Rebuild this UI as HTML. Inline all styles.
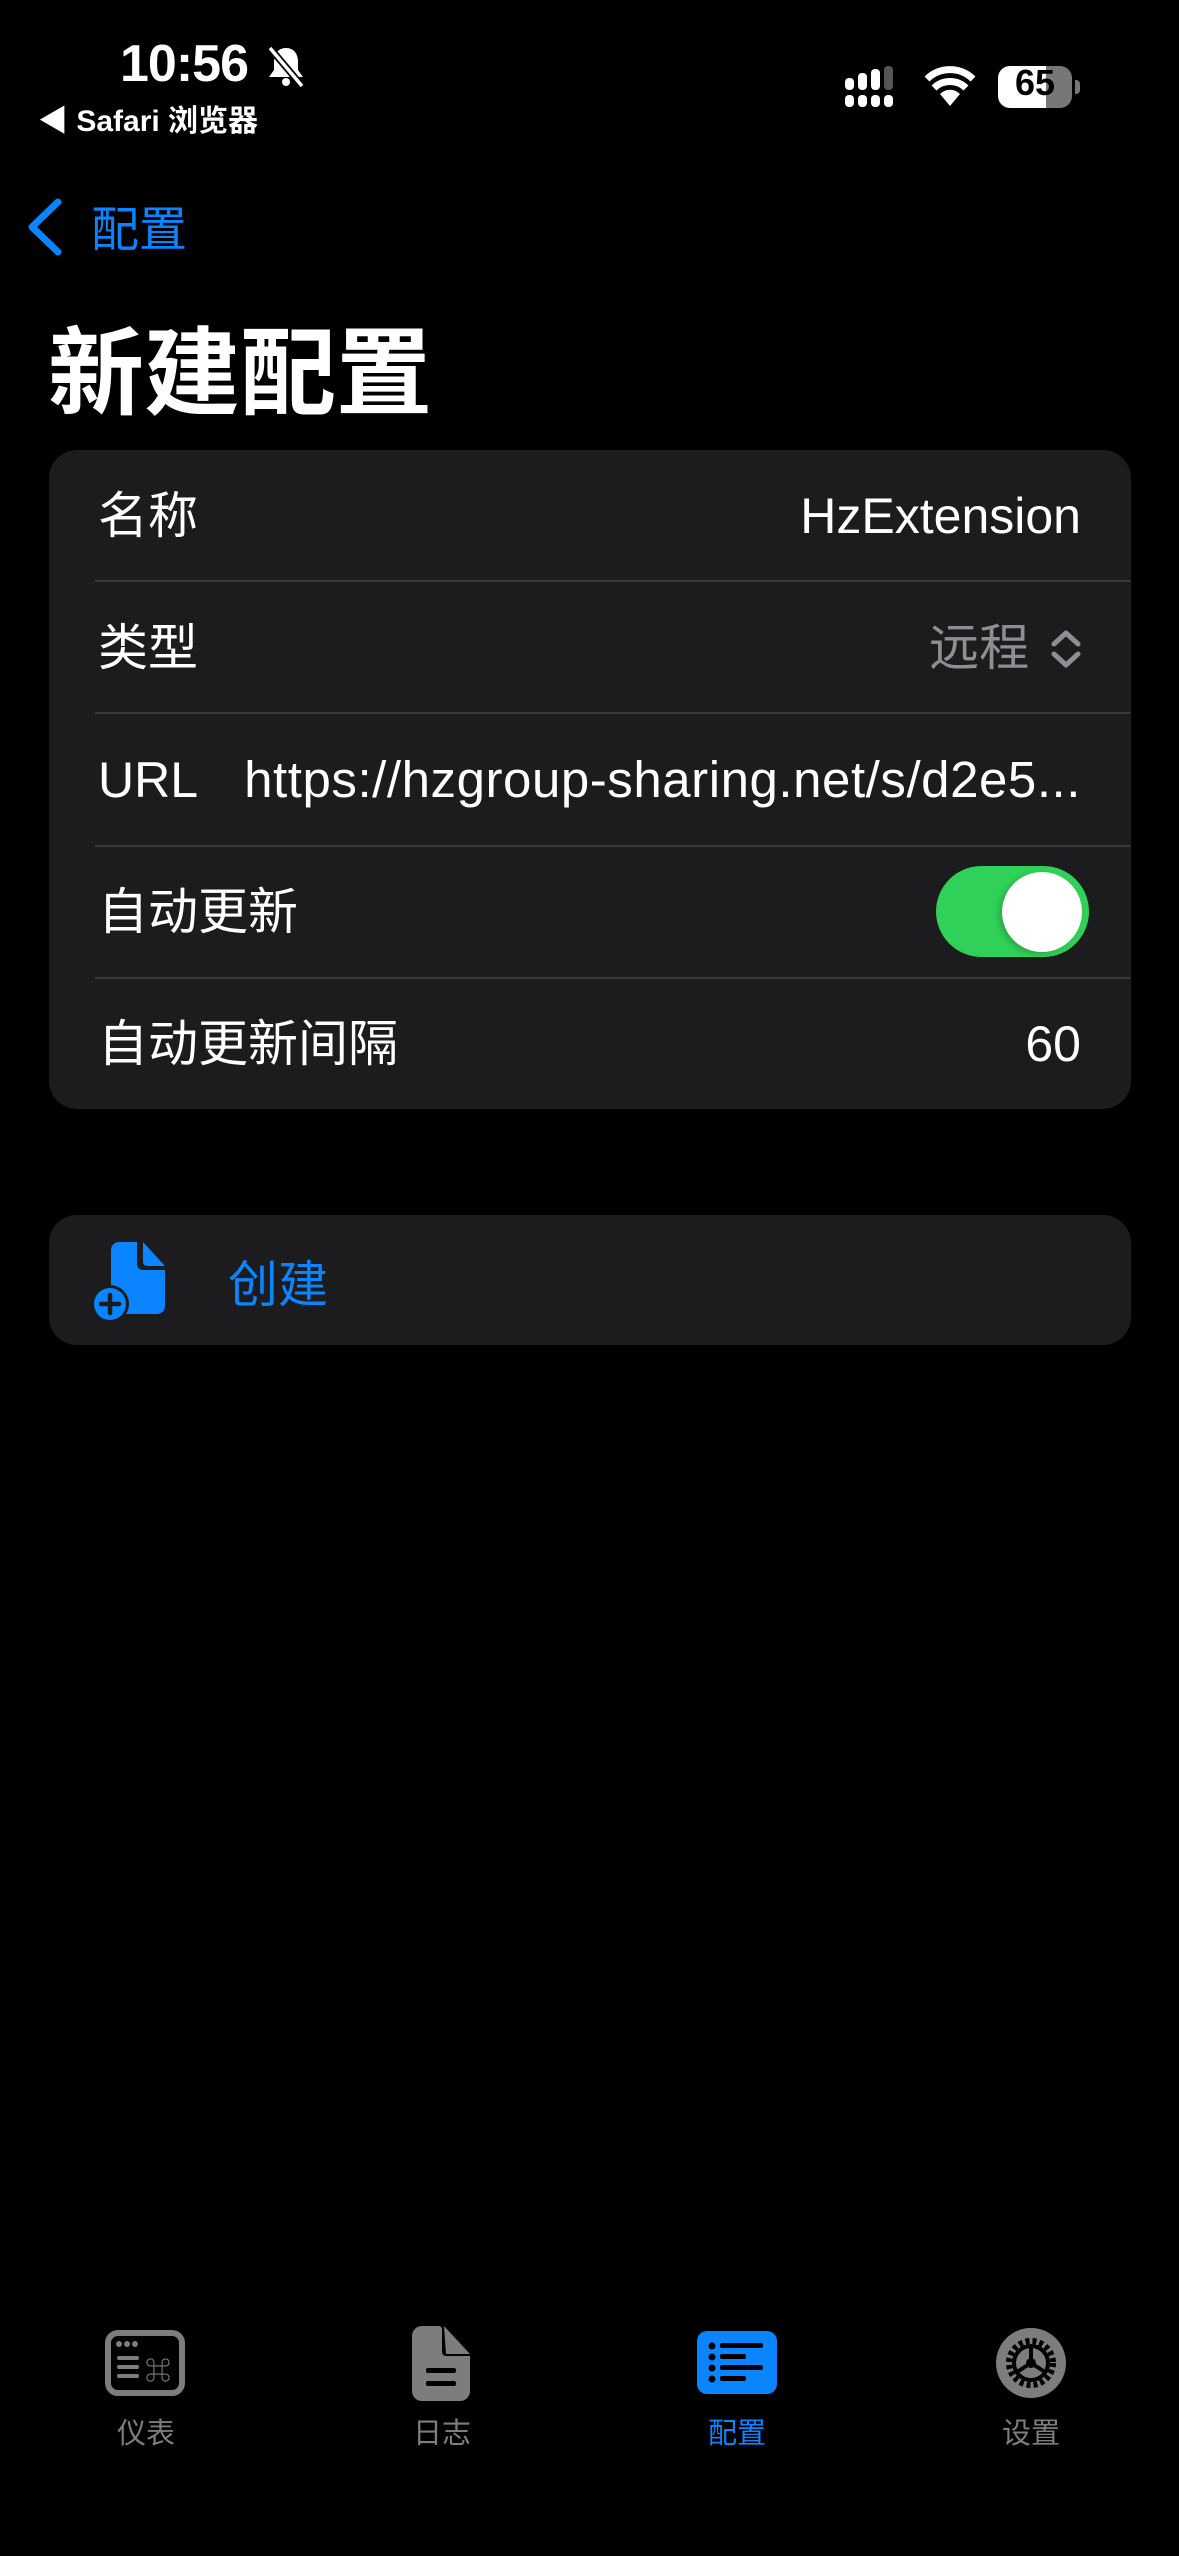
<!DOCTYPE html>
<html><head><meta charset="utf-8"><style>
*{margin:0;padding:0;box-sizing:border-box}
body{width:1179px;height:2556px;background:#000;color:#fff;font-family:"Liberation Sans","Noto Sans CJK SC",sans-serif;position:relative;overflow:hidden}
.a{position:absolute;white-space:nowrap}
.card{position:absolute;left:49px;width:1082px;background:#1c1c1e;border-radius:28px}
.row{position:absolute;left:0;right:0;height:132px}
.lbl{position:absolute;left:49px;top:0;line-height:132px;font-size:50px}
.val{position:absolute;right:50px;top:0;line-height:132px;font-size:50px}
.div{position:absolute;left:46px;right:0;height:2px;background:#38383a}
.tab{position:absolute;top:2410px;font-size:29px;color:#7d7d7d;width:120px;text-align:center}
</style></head><body>
<div class="a" style="left:120px;top:34px;font-size:52px;font-weight:bold;letter-spacing:-1px">10:56</div>
<svg class="a" style="left:264px;top:44px" width="44" height="44" viewBox="0 0 44 44"><path d="M22 4c-8 0-12 6-12 14v8l-5 7h34l-5-7v-8c0-8-4-14-12-14z" fill="#fff"/><circle cx="22" cy="38" r="4" fill="#fff"/><path d="M6 4l32 38" stroke="#000" stroke-width="7"/><path d="M6 4l32 38" stroke="#fff" stroke-width="3.5"/></svg>
<div class="a" style="left:38px;top:96px;font-size:30px;font-weight:bold">◀ Safari 浏览器</div>
<svg class="a" style="left:845px;top:66px" width="62" height="44"><g fill="#fff"><rect x="0" y="12" width="9" height="12" rx="4"/><rect x="13" y="7" width="9" height="17" rx="4"/><rect x="26" y="3" width="9" height="21" rx="4"/><rect x="0" y="29" width="9" height="12" rx="4"/><rect x="13" y="29" width="9" height="12" rx="4"/><rect x="26" y="29" width="9" height="12" rx="4"/><rect x="39" y="29" width="9" height="12" rx="4"/></g><rect x="39" y="0" width="9" height="24" rx="4" fill="#555"/></svg>
<svg class="a" style="left:924px;top:66px" width="52" height="42" viewBox="0 0 52 42"><path d="M26 40L16 28a14 14 0 0 1 20 0z" fill="#fff"/><path d="M10 22a23 23 0 0 1 32 0" stroke="#fff" stroke-width="7" fill="none"/><path d="M3 13a33 33 0 0 1 46 0" stroke="#fff" stroke-width="7" fill="none"/></svg>
<div class="a" style="left:998px;top:66px;width:74px;height:42px;border-radius:12px;background:linear-gradient(90deg,#fff 0,#fff 65%,#777 65%)"></div>
<div class="a" style="left:1075px;top:80px;width:5px;height:14px;border-radius:0 4px 4px 0;background:#777"></div>
<div class="a" style="left:998px;top:62px;width:74px;text-align:center;font-size:36px;font-weight:bold;color:#000">65</div>
<svg class="a" style="left:24px;top:198px" width="40" height="58"><path d="M34 4L8 29l26 25" stroke="#0a84ff" stroke-width="7" fill="none" stroke-linecap="round" stroke-linejoin="round"/></svg>
<div class="a" style="left:91px;top:190px;font-size:48px;color:#0a84ff">配置</div>
<div class="a" style="left:48px;top:296px;font-size:96px;font-weight:bold">新建配置</div>
<div class="card" style="top:450px;height:659px">
 <div class="row" style="top:0"><div class="lbl">名称</div><div class="val">HzExtension</div></div>
 <div class="div" style="top:130px"></div>
 <div class="row" style="top:132px"><div class="lbl">类型</div><div class="val" style="color:#8e8e93;right:48px">远程 <svg width="34" height="40" viewBox="0 0 34 40" style="vertical-align:-4px;margin-left:6px"><path d="M5 15L17 4l12 11M5 25l12 11 12-11" stroke="#8e8e93" stroke-width="5" fill="none" stroke-linecap="round" stroke-linejoin="round"/></svg></div></div>
 <div class="div" style="top:262px"></div>
 <div class="row" style="top:264px"><div class="lbl">URL</div><div class="val" style="font-size:51px;letter-spacing:0.55px">https://hzgroup-sharing.net/s/d2e5...</div></div>
 <div class="div" style="top:395px"></div>
 <div class="row" style="top:396px"><div class="lbl">自动更新</div>
  <div style="position:absolute;left:887px;top:20px;width:153px;height:91px;border-radius:46px;background:#30d158"></div>
  <div style="position:absolute;left:953px;top:26px;width:80px;height:80px;border-radius:50%;background:#fff;box-shadow:-3px 2px 6px rgba(0,0,0,.2)"></div></div>
 <div class="div" style="top:527px"></div>
 <div class="row" style="top:528px"><div class="lbl">自动更新间隔</div><div class="val">60</div></div>
</div>
<div class="card" style="top:1215px;height:130px">
 <svg style="position:absolute;left:44px;top:27px" width="76" height="80" viewBox="0 0 76 80"><path d="M26 0h18v22a6 6 0 0 0 6 6h22v36a8 8 0 0 1-8 8H26a8 8 0 0 1-8-8V8a8 8 0 0 1 8-8z" fill="#0a84ff"/><path d="M50 0l22 24H54a4 4 0 0 1-4-4z" fill="#0a84ff"/><circle cx="17" cy="62" r="19" fill="#1c1c1e"/><circle cx="17" cy="62" r="16" fill="#0a84ff"/><path d="M17 53v18M8 62h18" stroke="#1c1c1e" stroke-width="4.5" stroke-linecap="round"/></svg>
 <div class="a" style="left:179px;top:30px;font-size:50px;color:#0a84ff">创建</div>
</div>
<svg class="a" style="left:105px;top:2330px" width="80" height="66" viewBox="0 0 80 66"><rect x="3" y="3" width="74" height="60" rx="10" fill="none" stroke="#7d7d7d" stroke-width="6"/><g fill="#7d7d7d"><circle cx="14" cy="14" r="3"/><circle cx="22" cy="14" r="3"/><circle cx="30" cy="14" r="3"/><rect x="12" y="26" width="22" height="4" rx="2"/><rect x="12" y="35" width="22" height="4" rx="2"/><rect x="12" y="44" width="22" height="4" rx="2"/></g><text x="40" y="50" font-size="26" font-weight="bold" fill="#7d7d7d">⌘</text></svg>
<svg class="a" style="left:412px;top:2326px" width="60" height="75" viewBox="0 0 60 75"><path d="M10 0h18l30 30v35a10 10 0 0 1-10 10H10A10 10 0 0 1 0 65V10A10 10 0 0 1 10 0z" fill="#7d7d7d"/><path d="M30 0l28 30H34a4 4 0 0 1-4-4z" fill="#000"/><path d="M32 0l26 28H34z" fill="#7d7d7d"/><rect x="14" y="42" width="30" height="5" rx="2" fill="#000"/><rect x="14" y="55" width="30" height="5" rx="2" fill="#000"/></svg>
<div class="a" style="left:697px;top:2331px;width:80px;height:63px;border-radius:10px;background:#0a84ff"></div>
<svg class="a" style="left:697px;top:2331px" width="80" height="63"><g fill="#000"><circle cx="15" cy="15" r="3.5"/><circle cx="15" cy="26" r="3.5"/><circle cx="15" cy="37" r="3.5"/><circle cx="15" cy="48" r="3.5"/><rect x="23" y="12" width="43" height="5" rx="2"/><rect x="23" y="23" width="26" height="5" rx="2"/><rect x="23" y="34" width="43" height="5" rx="2"/><rect x="23" y="45" width="26" height="5" rx="2"/></g></svg>
<svg class="a" style="left:996px;top:2328px" width="70" height="70" viewBox="0 0 70 70"><circle cx="35" cy="35" r="35" fill="#7d7d7d"/><circle cx="35" cy="35" r="22" fill="none" stroke="#000" stroke-width="6" stroke-dasharray="4 3"/><circle cx="35" cy="35" r="17" fill="none" stroke="#000" stroke-width="4"/><path d="M35 18v17M35 35l-14 9M35 35l14 9" stroke="#000" stroke-width="4"/><circle cx="35" cy="35" r="5" fill="#000"/></svg>
<div class="tab" style="left:86px">仪表</div>
<div class="tab" style="left:382px">日志</div>
<div class="tab" style="left:677px;color:#0a84ff">配置</div>
<div class="tab" style="left:971px">设置</div>
</body></html>
